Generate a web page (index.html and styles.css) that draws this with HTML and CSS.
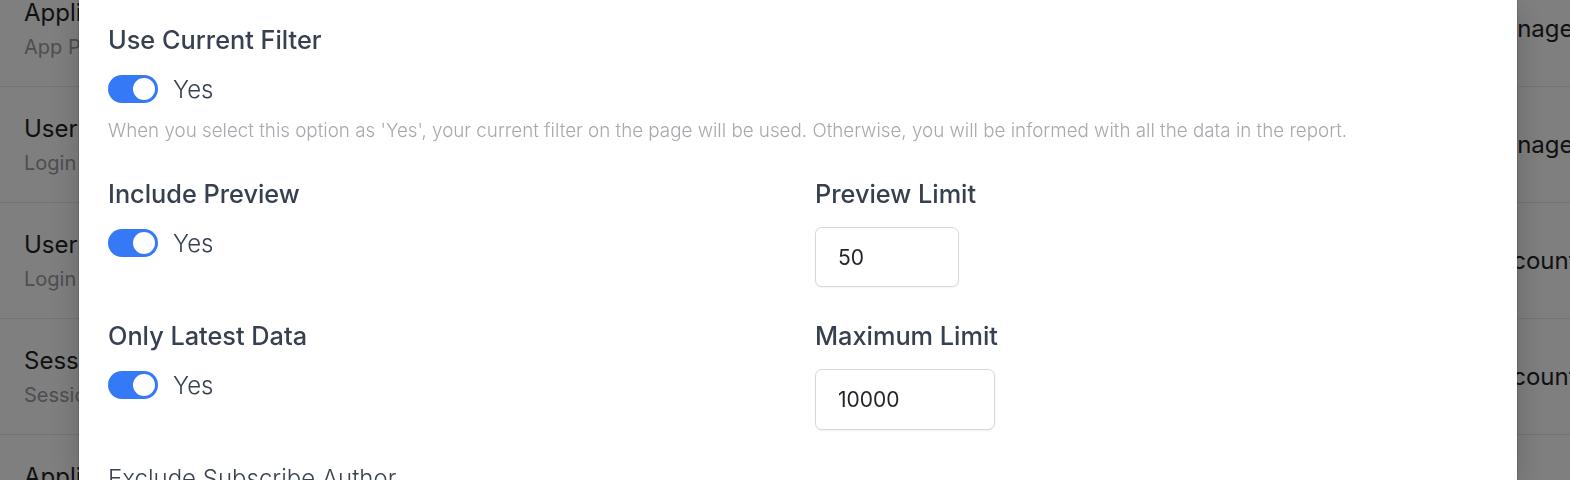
FILE: index.html
```html
<!DOCTYPE html>
<html lang="en">
<head>
<meta charset="utf-8">
<title>Export settings</title>
<link rel="stylesheet" href="styles.css">
</head>
<body>
<div class="page">
  <ul class="list">
    <li class="row"><div class="row-main"><div class="row-title">Application Settings</div><div class="row-sub">App Permissions and preferences</div></div><div class="row-action">Manage</div></li>
    <li class="row"><div class="row-main"><div class="row-title">User Logins</div><div class="row-sub">Login history report</div></div><div class="row-action">Manage</div></li>
    <li class="row"><div class="row-main"><div class="row-title">User Accounts</div><div class="row-sub">Login accounts report</div></div><div class="row-action">Accounts</div></li>
    <li class="row"><div class="row-main"><div class="row-title">Sessions</div><div class="row-sub">Session activity report</div></div><div class="row-action">Accounts</div></li>
    <li class="row"><div class="row-main"><div class="row-title">Applications</div><div class="row-sub">App usage report</div></div><div class="row-action">Manage</div></li>
  </ul>
</div>

<div class="overlay">
  <div class="modal">
    <div class="form">
      <div class="field field-wide">
        <div class="label">Use Current Filter</div>
        <label class="switch-row">
          <span class="switch"><span class="knob"></span></span>
          <span class="switch-text">Yes</span>
        </label>
        <p class="help">When you select this option as 'Yes', your current filter on the page will be used. Otherwise, you will be informed with all the data in the report.</p>
      </div>

      <div class="field">
        <div class="label">Include Preview</div>
        <label class="switch-row">
          <span class="switch"><span class="knob"></span></span>
          <span class="switch-text">Yes</span>
        </label>
      </div>
      <div class="field">
        <div class="label">Preview Limit</div>
        <div class="input input-sm">50</div>
      </div>

      <div class="field">
        <div class="label">Only Latest Data</div>
        <label class="switch-row">
          <span class="switch"><span class="knob"></span></span>
          <span class="switch-text">Yes</span>
        </label>
      </div>
      <div class="field">
        <div class="label">Maximum Limit</div>
        <div class="input input-md">10000</div>
      </div>

      <div class="field field-wide">
        <div class="label label-light">Exclude Subscribe Author</div>
      </div>
    </div>
  </div>
</div>
</body>
</html>
```

FILE: styles.css
```css
* { box-sizing: border-box; }

html, body {
  margin: 0;
  padding: 0;
  height: 100%;
  overflow: hidden;
}

body {
  font-family: Inter, "Noto Sans", "Liberation Sans", sans-serif;
  background: #ffffff;
  color: #1f2937;
}

/* background page */
.list {
  list-style: none;
  margin: -29px 0 0 0;
  padding: 0;
}

.row {
  height: 116px;
  border-bottom: 1px solid #e5e7eb;
  display: flex;
  align-items: center;
  justify-content: space-between;
  padding: 0 0 0 24px;
}

.row-main {
  display: flex;
  flex-direction: column;
  gap: 8px;
}

.row-title {
  font-size: 24px;
  line-height: 28px;
  color: #1f2328;
  white-space: nowrap;
}

.row-sub {
  font-size: 20px;
  line-height: 24px;
  color: #9a9da3;
  white-space: nowrap;
}

.row-action {
  flex: none;
  width: 88px;
  font-size: 24px;
  color: #1f2328;
  white-space: nowrap;
  overflow: hidden;
}

/* overlay + modal */
.overlay {
  position: fixed;
  inset: 0;
  background: rgba(0, 0, 0, 0.5);
  padding-left: 79px;
}

.modal {
  width: 1438px;
  height: 100%;
  background: #ffffff;
  box-shadow: 0 0 0 1px rgba(0, 0, 0, 0.12), 0 10px 30px rgba(0, 0, 0, 0.2);
}

.form {
  padding: 26px 29px 0 29px;
  display: grid;
  grid-template-columns: 1fr 1fr;
  column-gap: 34px;
  row-gap: 35px;
}

.field-wide {
  grid-column: 1 / -1;
  margin-bottom: 2px;
}

.label {
  font-size: 25.3px;
  line-height: 28px;
  font-weight: 500;
  color: #36404e;
  margin-bottom: 19px;
  white-space: nowrap;
}

.label-light {
  font-size: 24px;
  font-weight: 300;
  color: #3b4350;
}

.switch-row {
  display: flex;
  align-items: center;
  gap: 15px;
  height: 32px;
}

.switch {
  position: relative;
  width: 50px;
  height: 28px;
  border-radius: 14px;
  background: #3579f6;
  flex: none;
}

.knob {
  position: absolute;
  top: 3px;
  right: 3px;
  width: 22px;
  height: 22px;
  border-radius: 50%;
  background: #ffffff;
}

.switch-text {
  font-size: 24px;
  font-weight: 300;
  color: #36404e;
}

.help {
  margin: 14px 0 0 0;
  font-size: 18.8px;
  line-height: 24px;
  font-weight: 300;
  color: #a6a9ae;
  white-space: nowrap;
}

.input {
  height: 60px;
  border: 1px solid #d5d8dd;
  border-radius: 7px;
  box-shadow: 0 1px 2px rgba(0, 0, 0, 0.06);
  padding: 0 22px;
  display: flex;
  align-items: center;
  font-size: 21px;
  color: #1f2328;
  background: #ffffff;
}

.input-sm { width: 144px; }
.input-md { width: 180px; height: 61px; }
```
